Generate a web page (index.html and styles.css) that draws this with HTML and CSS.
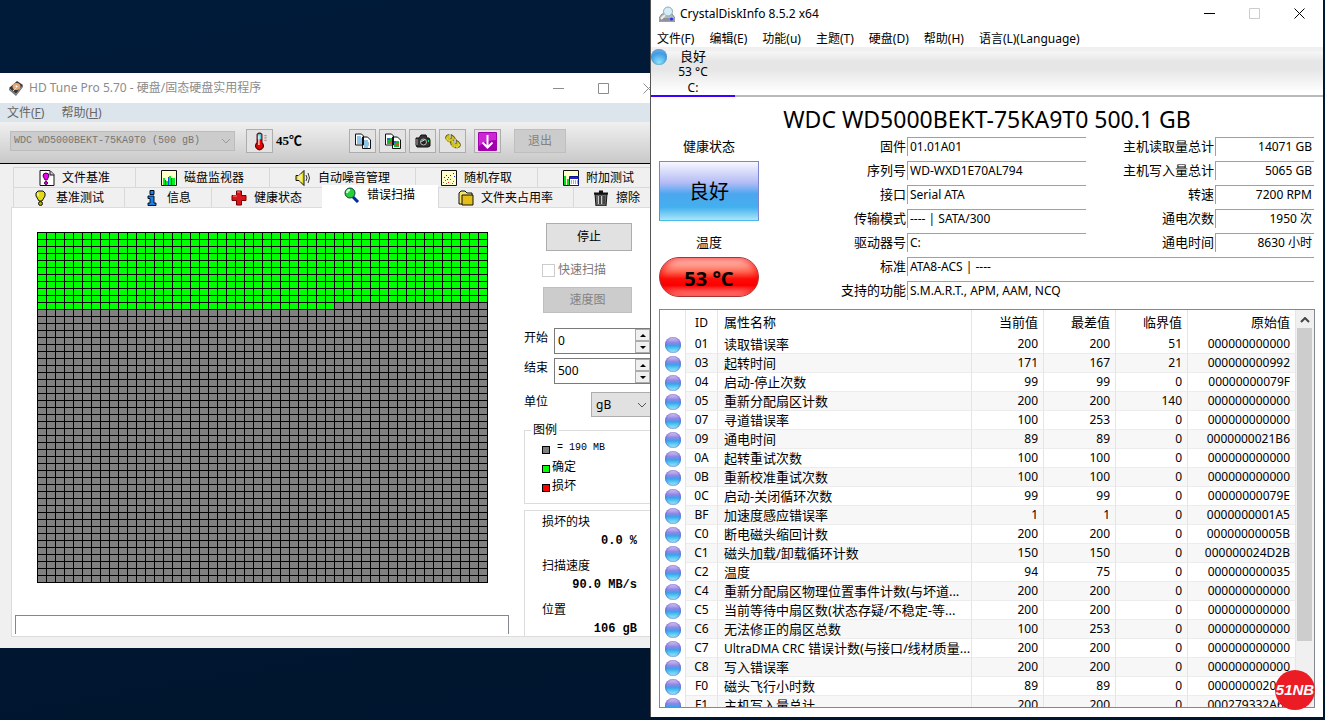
FILE: index.html
```html
<!DOCTYPE html>
<html lang="zh-CN">

<head>
  <meta charset="UTF-8">
  <meta name="viewport" content="width=device-width, initial-scale=1.0">
  <title>HD Tune Pro / CrystalDiskInfo</title>
  <link rel="stylesheet" href="styles.css">
</head>

<body>
  <section class="window hdtune">
    <header class="hd-title">
      <svg class="icon" viewBox="0 0 16 16"><path d="M1 8L9 1l6 4-7 9z" fill="#3a3432"/><path d="M1 8l7 6v2L1 10zM8 14l7-9v2l-7 9z" fill="#777"/><ellipse cx="8.500" cy="6.500" rx="4" ry="3.500" fill="#e0a878"/><circle cx="8.500" cy="6.500" r="1" fill="#fff"/><path d="M5 11l3-3" stroke="#ddd"/></svg>
      <span class="hd-name">HD Tune Pro 5.70 - 硬盘/固态硬盘实用程序</span>
      <button class="win-btn" aria-label="最小化"><svg viewBox="0 0 11 11"><path d="M0 5.500h11"/></svg></button>
      <button class="win-btn" aria-label="最大化"><svg viewBox="0 0 11 11"><path d="M.5.5h10v10H.5z"/></svg></button>
      <button class="win-btn" aria-label="关闭"><svg viewBox="0 0 11 11"><path d="M.5.5l10 10M10.500.5l-10 10"/></svg></button>
    </header>

    <nav class="hd-menu">
      <a href="#">文件(<u>F</u>)</a>
      <a href="#">帮助(<u>H</u>)</a>
    </nav>

    <div class="toolbar">
      <div class="drive">
        <select aria-label="驱动器" disabled>
          <option>WDC WD5000BEKT-75KA9T0 (500 gB)</option>
        </select>
        <svg class="arrow" viewBox="0 0 10 6"><path d="M1 1l4 4 4-4"/></svg>
      </div>
      <button class="tool temp-tool" aria-label="温度"><svg class="icon-lg" viewBox="0 0 16 16"><path d="M6 2q2-2 4 0v7q2 2 1 4-3 4-6 0-1-2 1-4z" fill="#e00" stroke="#600"/><path d="M6.500 2q1.500-1 3 0v4h-3z" fill="#5cd"/><path d="M7.500 3v8" stroke="#fff"/><path d="M12 3h2M12 5h2M12 7h2" stroke="#a99"/></svg></button>
      <b class="temp">45℃</b>
      <div class="tools">
        <button class="tool" aria-label="复制文本"><svg class="icon" viewBox="0 0 16 16"><path d="M.5 1h6l2 2v9h-8zM7.500 4h5l3 3v8.500h-8z" fill="#fff" stroke="#111"/><path d="M2 4h4M2 6h5M2 8h5M2 10h5M9 8h4M9 10h5M9 12h5M9 14h4" stroke="#28c"/></svg></button>
        <button class="tool" aria-label="复制图像"><svg class="icon" viewBox="0 0 16 16"><path d="M.5 1h6l2 2v9h-8zM7.500 4h5l3 3v8.500h-8z" fill="#fff" stroke="#111"/><path d="M2 5h5v6H2zM9 8h5v6H9z" fill="#1b3"/><path d="M2 5h3v2H2zM9 8h2v2H9z" fill="#36d"/><path d="M5 8h2v2H5zM11 11h3v2h-3z" fill="#e43"/></svg></button>
        <button class="tool" aria-label="截图"><svg class="icon" viewBox="0 0 16 16"><path d="M1 5h3l2-3h5l1 3h2l1 2v6l-2 1H2l-1-2z" fill="#333" stroke="#111"/><path d="M2 6v6" stroke="#aaa"/><circle cx="8.500" cy="9" r="3" fill="#222" stroke="#bbb"/><path d="M6.500 9q1-2 3-2" stroke="#fff" fill="none"/><path d="M13 7h1v2h-1z" fill="#0e4"/></svg></button>
        <button class="tool" aria-label="选项"><svg class="icon" viewBox="0 0 16 16"><ellipse cx="5.500" cy="5.500" rx="5" ry="3.500" fill="#cfc31c" stroke="#665a00" transform="rotate(25 5.500 5.500)"/><ellipse cx="10.500" cy="11" rx="5" ry="3.500" fill="#cfc31c" stroke="#665a00" transform="rotate(25 10.500 11)"/><path d="M2 5v3M4 7v3M7 7v2M7 12v2M9 13v2M12 13v2M14 11v2" stroke="#f2ea70"/><path d="M6 1v5M11 6v5" stroke="#444"/><path d="M4 1h2v4H4zM9 6h2v4H9z" fill="#bbb"/></svg></button>
        <button class="tool save" aria-label="保存"><svg class="icon-lg" viewBox="0 0 19 19"><rect width="19" height="19" rx="1" fill="#a300ad"/><path d="M1 1h17v7Q8 8 1 14z" fill="#c928d2"/><path d="M9.500 3v12M4.500 10.500l5 5 5-5" fill="none" stroke="#fff" stroke-width="2"/></svg></button>
      </div>
      <button class="btn exit" disabled>退出</button>
    </div>

    <div class="tabs" role="tablist">
      <div class="tab-row top-row">
        <button class="tab" role="tab"><svg class="icon" viewBox="0 0 16 16"><path d="M1 .5h10l4 4v11H1z" fill="#fff" stroke="#111"/><path d="M11 1v4h4" fill="#ccc" stroke="#111"/><path d="M4 6q0-3 3-3t3 3l-2 4H6z" fill="#e0e" stroke="#404"/><circle cx="7" cy="13" r="1.500" fill="#e0e" stroke="#404"/></svg>文件基准</button>
        <button class="tab" role="tab"><svg class="icon" viewBox="0 0 16 16"><path d="M.5.5h15v15H.5z" fill="#ffc" stroke="#111"/><path d="M2 8h2v7H2zM5 11h2v4H5zM8 6h2v9H8zM11 8h3v7h-3z" fill="#0e2"/><path d="M4 10h1v5H4zM7 7h1v8H7zM10 8h1v7h-1z" fill="#05d"/></svg>磁盘监视器</button>
        <button class="tab" role="tab"><svg class="icon" viewBox="0 0 16 16"><path d="M1 5.500h3l5-5v15l-5-5H1z" fill="#e8dc20" stroke="#111"/><path d="M4 5v5M6 4v8" stroke="#fff"/><path d="M11 5q2 3 0 6M13 3q3 5 0 10" fill="none" stroke="#333"/></svg>自动噪音管理</button>
        <button class="tab" role="tab"><svg class="icon" viewBox="0 0 16 16"><path d="M.5.5h15v15H.5z" fill="#ffc" stroke="#111"/><path d="M2 12h1v1H2zM4 10h1v1H4zM7 12h1v1H7zM9 9h1v1H9zM12 11h1v1h-1zM5 13h1v1H5zM11 13h1v1h-1z" fill="#f22"/><path d="M3 7h1v1H3zM5 5h1v1H5zM7 7h1v1H7zM9 5h1v1H9zM12 3h1v1h-1zM13 6h1v1h-1zM6 9h1v1H6z" fill="#22d"/></svg>随机存取</button>
        <button class="tab" role="tab"><svg class="icon" viewBox="0 0 16 16"><path d="M.5.5h15v15H.5z" fill="#ffc" stroke="#111"/><path d="M1 6h2v9H1zM4 9h2v6H4z" fill="#0d2"/><path d="M6.500 6.500h9v9h-9z" fill="#fff" stroke="#118"/><path d="M7 7h8v2H7z" fill="#22c"/><path d="M8 11h7M8 13h7" stroke="#e22" stroke-dasharray="1 1"/></svg>附加测试</button>
      </div>
      <div class="tab-row">
        <button class="tab" role="tab"><svg class="icon" viewBox="0 0 16 16"><path d="M5 1h5l2 2v3l-3 5H6L3 6V3z" fill="#e2da18" stroke="#111"/><path d="M5 3v3" stroke="#fff"/><circle cx="7.500" cy="13.500" r="2" fill="#aa1" stroke="#111"/></svg>基准测试</button>
        <button class="tab" role="tab"><svg class="icon" viewBox="0 0 16 16"><path d="M6 .5h4v4H6zM4 6h6v7h2v2.500H4V13h2V8.500H4z" fill="#1c7fe8" stroke="#012"/></svg>信息</button>
        <button class="tab" role="tab"><svg class="icon" viewBox="0 0 16 16"><path d="M5.500 1h5v4.500H15v5h-4.500V15h-5v-4.500H1v-5h4.500z" fill="#d8161c" stroke="#700"/><path d="M6 2h3M2 6h4" stroke="#f88"/></svg>健康状态</button>
        <button class="tab active" role="tab" aria-selected="true"><svg class="icon" viewBox="0 0 16 16"><path d="M9 10l5 5" stroke="#012a9a" stroke-width="3"/><circle cx="6" cy="6" r="5" fill="#24d03c" stroke="#143"/><path d="M3 6q0-3 3-3" stroke="#dfd" fill="none" stroke-width="2"/></svg>错误扫描</button>
        <button class="tab" role="tab"><svg class="icon" viewBox="0 0 16 16"><path d="M1 3l2-2h4l2 2h5v11H1z" fill="#f5e36a" stroke="#111"/><path d="M4 5h11v10H4z" fill="#e3bd18" stroke="#111"/></svg>文件夹占用率</button>
        <button class="tab" role="tab"><svg class="icon" viewBox="0 0 16 16"><path d="M2 4h12l-1 12H3z" fill="#666" stroke="#111"/><path d="M1 3.500h14M6 1.500h4" stroke="#111" stroke-width="2"/><path d="M5.500 6v8M8.500 6v8" stroke="#ccc"/><path d="M7 6v8M11 6v8" stroke="#222"/></svg>擦除</button>
      </div>
    </div>

    <div class="panel">
      <div class="scan">
        <!-- 50 x 50 blocks, 9x7 each -->
        <svg class="map" viewBox="0 0 451 351">
          <defs>
            <pattern id="cells" width="9" height="7" patternUnits="userSpaceOnUse">
              <path d="M0 0h9v1H1v6H0z" fill="#000"/>
            </pattern>
          </defs>
          <rect width="451" height="351" fill="#808080"/>
          <path d="M0 0h451v70H298v7H0z" fill="#00ff00"/>
          <rect width="451" height="351" fill="url(#cells)"/>
        </svg>
        <div class="progress"></div>
      </div>

      <div class="side">
        <button class="btn stop">停止</button>
        <label class="quick"><input type="checkbox" disabled>快速扫描</label>
        <button class="btn speed" disabled>速度图</button>
        <div class="field">
          <label for="start">开始</label>
          <div class="spin">
            <input id="start" type="text" value="0">
            <button class="up" aria-label="增加"></button>
            <button class="down" aria-label="减少"></button>
          </div>
        </div>
        <div class="field">
          <label for="end">结束</label>
          <div class="spin">
            <input id="end" type="text" value="500">
            <button class="up" aria-label="增加"></button>
            <button class="down" aria-label="减少"></button>
          </div>
        </div>
        <div class="field unit">
          <label for="unit">单位</label>
          <div class="unit-select">
            <select id="unit">
              <option>gB</option>
              <option>mB</option>
            </select>
            <svg class="arrow" viewBox="0 0 10 6"><path d="M1 1l4 4 4-4"/></svg>
          </div>
        </div>
        <fieldset class="legend">
          <legend>图例</legend>
          <p class="mono"><i class="block"></i>= 190 MB</p>
          <p><i class="block ok"></i>确定</p>
          <p><i class="block bad"></i>损坏</p>
        </fieldset>
        <dl class="result">
          <dt>损坏的块</dt>
          <dd>0.0 %</dd>
          <dt>扫描速度</dt>
          <dd>90.0 MB/s</dd>
          <dt>位置</dt>
          <dd>106 gB</dd>
        </dl>
      </div>
    </div>
  </section>

  <section class="window crystal">
    <header class="cdi-title">
      <svg class="icon" viewBox="0 0 16 16"><path d="M3 8h10l3 4v4H0v-4z" fill="#b4b8c0" stroke="#888"/><path d="M1 12h14v3H1z" fill="#8d929c"/><circle cx="9" cy="5.500" r="4.500" fill="#d5ecfa" stroke="#8aa"/><path d="M6 9l-4 4" stroke="#eee" stroke-width="2"/><circle cx="12.500" cy="13" r="1.500" fill="#23f"/></svg>
      <span class="cdi-name">CrystalDiskInfo 8.5.2 x64</span>
      <button class="win-btn" aria-label="最小化"><svg viewBox="0 0 11 11"><path d="M0 5.500h11"/></svg></button>
      <button class="win-btn" aria-label="最大化" disabled><svg viewBox="0 0 11 11"><path d="M.5.5h10v10H.5z"/></svg></button>
      <button class="win-btn" aria-label="关闭"><svg viewBox="0 0 11 11"><path d="M.5.5l10 10M10.500.5l-10 10"/></svg></button>
    </header>

    <nav class="cdi-menu">
      <a href="#">文件(F)</a>
      <a href="#">编辑(E)</a>
      <a href="#">功能(u)</a>
      <a href="#">主题(T)</a>
      <a href="#">硬盘(D)</a>
      <a href="#">帮助(H)</a>
      <a href="#">语言(L)(Language)</a>
    </nav>

    <div class="disks">
      <button class="disk">
        <i class="orb"></i>
        <span class="zh">良好</span>
        <span>53 °C</span>
        <span>C:</span>
      </button>
    </div>

    <h1>WDC WD5000BEKT-75KA9T0 500.1 GB</h1>

    <div class="summary">
      <div class="status">
        <span class="caption">健康状态</span>
        <button class="health">良好</button>
        <span class="caption">温度</span>
        <button class="heat">53 °C</button>
      </div>
      <div class="info">
        <label for="fw">固件</label><input id="fw" value="01.01A01" readonly>
        <label for="reads">主机读取量总计</label><input id="reads" class="num" value="14071 GB" readonly>
        <label for="sn">序列号</label><input id="sn" value="WD-WXD1E70AL794" readonly>
        <label for="writes">主机写入量总计</label><input id="writes" class="num" value="5065 GB" readonly>
        <label for="iface">接口</label><input id="iface" value="Serial ATA" readonly>
        <label for="rpm">转速</label><input id="rpm" class="num" value="7200 RPM" readonly>
        <label for="mode">传输模式</label><input id="mode" value="---- | SATA/300" readonly>
        <label for="count">通电次数</label><input id="count" class="num" value="1950 次" readonly>
        <label for="letter">驱动器号</label><input id="letter" value="C:" readonly>
        <label for="hours">通电时间</label><input id="hours" class="num" value="8630 小时" readonly>
        <label for="std">标准</label><input id="std" class="wide" value="ATA8-ACS | ----" readonly>
        <label for="feat">支持的功能</label><input id="feat" class="wide" value="S.M.A.R.T., APM, AAM, NCQ" readonly>
      </div>
    </div>

    <div class="smart">
      <div class="smart-view">
        <table>
          <colgroup>
            <col class="c-icon"><col class="c-id"><col><col class="c-val"><col class="c-val"><col class="c-val"><col class="c-raw">
          </colgroup>
          <thead>
            <tr><th></th><th>ID</th><th>属性名称</th><th>当前值</th><th>最差值</th><th>临界值</th><th>原始值</th></tr>
          </thead>
          <tbody>
            <tr><td><i class="orb"></i></td><td>01</td><td>读取错误率</td><td>200</td><td>200</td><td>51</td><td>000000000000</td></tr>
            <tr><td><i class="orb"></i></td><td>03</td><td>起转时间</td><td>171</td><td>167</td><td>21</td><td>000000000992</td></tr>
            <tr><td><i class="orb"></i></td><td>04</td><td>启动-停止次数</td><td>99</td><td>99</td><td>0</td><td>00000000079F</td></tr>
            <tr><td><i class="orb"></i></td><td>05</td><td>重新分配扇区计数</td><td>200</td><td>200</td><td>140</td><td>000000000000</td></tr>
            <tr><td><i class="orb"></i></td><td>07</td><td>寻道错误率</td><td>100</td><td>253</td><td>0</td><td>000000000000</td></tr>
            <tr><td><i class="orb"></i></td><td>09</td><td>通电时间</td><td>89</td><td>89</td><td>0</td><td>0000000021B6</td></tr>
            <tr><td><i class="orb"></i></td><td>0A</td><td>起转重试次数</td><td>100</td><td>100</td><td>0</td><td>000000000000</td></tr>
            <tr><td><i class="orb"></i></td><td>0B</td><td>重新校准重试次数</td><td>100</td><td>100</td><td>0</td><td>000000000000</td></tr>
            <tr><td><i class="orb"></i></td><td>0C</td><td>启动-关闭循环次数</td><td>99</td><td>99</td><td>0</td><td>00000000079E</td></tr>
            <tr><td><i class="orb"></i></td><td>BF</td><td>加速度感应错误率</td><td>1</td><td>1</td><td>0</td><td>0000000001A5</td></tr>
            <tr><td><i class="orb"></i></td><td>C0</td><td>断电磁头缩回计数</td><td>200</td><td>200</td><td>0</td><td>00000000005B</td></tr>
            <tr><td><i class="orb"></i></td><td>C1</td><td>磁头加载/卸载循环计数</td><td>150</td><td>150</td><td>0</td><td>000000024D2B</td></tr>
            <tr><td><i class="orb"></i></td><td>C2</td><td>温度</td><td>94</td><td>75</td><td>0</td><td>000000000035</td></tr>
            <tr><td><i class="orb"></i></td><td>C4</td><td>重新分配扇区物理位置事件计数(与坏道...</td><td>200</td><td>200</td><td>0</td><td>000000000000</td></tr>
            <tr><td><i class="orb"></i></td><td>C5</td><td>当前等待中扇区数(状态存疑/不稳定-等...</td><td>200</td><td>200</td><td>0</td><td>000000000000</td></tr>
            <tr><td><i class="orb"></i></td><td>C6</td><td>无法修正的扇区总数</td><td>100</td><td>253</td><td>0</td><td>000000000000</td></tr>
            <tr><td><i class="orb"></i></td><td>C7</td><td><span class="latin">UltraDMA CRC</span> 错误计数(与接口/线材质量...</td><td>200</td><td>200</td><td>0</td><td>000000000000</td></tr>
            <tr><td><i class="orb"></i></td><td>C8</td><td>写入错误率</td><td>200</td><td>200</td><td>0</td><td>000000000000</td></tr>
            <tr><td><i class="orb"></i></td><td>F0</td><td>磁头飞行小时数</td><td>89</td><td>89</td><td>0</td><td>000000002050</td></tr>
            <tr><td><i class="orb"></i></td><td>F1</td><td>主机写入量总计</td><td>200</td><td>200</td><td>0</td><td>000279332A6F</td></tr>
          </tbody>
        </table>
      </div>
      <div class="scrollbar">
        <svg viewBox="0 0 10 6"><path d="M1 5l4-4 4 4"/></svg>
        <div class="thumb"></div>
      </div>
    </div>
  </section>

  <div class="badge">51NB</div>
</body>

</html>
```
FILE: styles.css
```css
* {
  box-sizing: border-box;
}

body {
  margin: 0;
  height: 100vh;
  position: relative;
  overflow: hidden;
  font-family: "Noto Sans", "Noto Sans CJK SC", sans-serif;
  font-size: 12px;
  line-height: 16px;
  color: #000;
  background: linear-gradient(170deg, #001b3a, #001731 60%, #00152e);
}

button,
input,
select {
  font: inherit;
  color: inherit;
  margin: 0;
  padding: 0;
  border-radius: 0;
}

button {
  border: none;
  background: none;
}

a {
  color: inherit;
  text-decoration: none;
}

p,
dl,
dd,
h1 {
  margin: 0;
}

.icon {
  width: 16px;
  height: 16px;
  flex: none;
}

.icon-lg {
  width: 19px;
  height: 19px;
}

.arrow {
  position: absolute;
  right: 4px;
  top: 50%;
  width: 10px;
  height: 6px;
  margin-top: -3px;
  fill: none;
  stroke: #555;
  pointer-events: none;
}

/* desktop windows */
.window {
  position: absolute;
  display: flex;
  flex-direction: column;
}

.win-btn {
  width: 45px;
  height: 100%;
  display: flex;
  align-items: center;
  justify-content: center;
}

.win-btn svg {
  width: 11px;
  height: 11px;
  fill: none;
  stroke: currentColor;
}

.hdtune {
  left: 0;
  top: 73px;
  width: 671px;
  background: #f0f0f0;
}

.hd-title {
  display: flex;
  align-items: center;
  height: 30px;
  padding-left: 8px;
  background: #fff;
  color: #8c8c8c;
}

.hd-name {
  flex: 1;
  padding-left: 5px;
}

.hd-menu {
  display: flex;
  gap: 17px;
  height: 19px;
  padding-left: 7px;
  line-height: 19px;
  background: #dce4ec;
  color: #666;
}

.toolbar {
  display: flex;
  align-items: center;
  height: 42px;
  padding: 0 10px 3px;
  background: linear-gradient(#f0f0f0, #c9c9c9);
  border-bottom: 1px solid #000;
}

.drive {
  position: relative;
  width: 225px;
}

.drive select {
  appearance: none;
  display: block;
  width: 100%;
  height: 20px;
  padding-left: 3px;
  border: 1px solid #bcbcbc;
  background: #ccc;
  color: #777;
  opacity: 1;
  font-family: "Liberation Mono", monospace;
  font-size: 10px;
}

.drive .arrow {
  stroke: #999;
}

.tool {
  display: flex;
  align-items: center;
  justify-content: center;
  width: 27px;
  height: 24px;
  border: 1px solid #adadad;
  background: #e3e3e3;
}

.temp-tool {
  margin-left: 11px;
}

.temp {
  width: 76px;
  padding-left: 3px;
  font-family: "Liberation Serif", "Noto Sans CJK SC", serif;
  font-size: 13px;
}

.tools {
  display: flex;
  gap: 3px;
}

.tools .save {
  margin-left: 5px;
}

.btn {
  border: 1px solid #adadad;
  background: #e1e1e1;
}

.btn:disabled {
  border-color: #bfbfbf;
  background: #ccc;
  color: #838383;
}

.exit {
  width: 52px;
  height: 24px;
  margin-left: 13px;
}

/* tabs */
.tabs {
  padding: 3px 0 0 13px;
}

.tab-row {
  display: flex;
  height: 20px;
}

.tab {
  display: flex;
  align-items: center;
  gap: 7px;
  height: 20px;
  padding: 0 20px 0 19px;
  border-left: 1px solid #d9d9d9;
  border-top: 1px solid #d9d9d9;
  background: #f0f0f0;
  white-space: nowrap;
}

.top-row .tab {
  padding: 0 25px;
}

.tab.active {
  position: relative;
  height: 23px;
  margin-top: -2px;
  padding: 0 23px 4px 21px;
  border-color: #fff;
  background: #fff;
}

.panel {
  display: flex;
  height: 430px;
  margin: 0 0 11px 11px;
  border: 1px solid #dcdcdc;
  background: #fff;
}

.scan {
  display: flex;
  flex-direction: column;
  justify-content: space-between;
  width: 512px;
  padding: 24px 15px 2px 3px;
}

.map {
  width: 451px;
  height: 351px;
  margin-left: 22px;
}

.progress {
  height: 19px;
  border: 1px solid #828790;
  border-bottom: none;
}

.side {
  display: flex;
  flex-direction: column;
  flex: 1;
}

.side > * {
  flex: none;
}

.stop {
  width: 86px;
  height: 28px;
  margin: 15px 0 0 22px;
}

.quick {
  display: flex;
  align-items: center;
  gap: 3px;
  margin: 11px 0 0 18px;
  color: #777;
}

.quick input {
  appearance: none;
  width: 13px;
  height: 13px;
  border: 1px solid #ccc;
  background: #fff;
}

.speed {
  width: 89px;
  height: 26px;
  margin: 9px 0 15px 19px;
}

.field {
  display: flex;
  justify-content: space-between;
  width: 127px;
  margin-bottom: 4px;
  line-height: 20px;
}

.spin {
  display: grid;
  grid-template: 12px 12px / 1fr 15px;
  width: 97px;
  height: 26px;
  border: 1px solid #7a7a7a;
  background: #fff;
}

.spin input {
  grid-row: 1 / 3;
  width: 100%;
  padding-left: 3px;
  border: none;
  background: none;
}

.spin button {
  display: flex;
  align-items: center;
  justify-content: center;
  border: 1px solid #acacac;
  background: #f0f0f0;
}

.up::before,
.down::before {
  content: "";
  border: 3px solid transparent;
}

.up::before {
  border-top: none;
  border-bottom-color: #000;
}

.down::before {
  border-bottom: none;
  border-top-color: #000;
}

.unit {
  margin-top: 4px;
}

.unit-select {
  position: relative;
  width: 60px;
}

.unit-select select {
  appearance: none;
  display: block;
  width: 100%;
  height: 25px;
  padding-left: 4px;
  border: 1px solid #adadad;
  background: #e1e1e1;
}

.legend {
  height: 82px;
  margin: 1px 0 6px;
  padding: 0 0 0 17px;
  border: 1px solid #dcdcdc;
}

.legend legend {
  margin-left: -11px;
  padding: 0 2px;
}

.legend p {
  display: flex;
  align-items: center;
  gap: 2px;
  height: 19px;
}

.legend .mono {
  gap: 7px;
  font-family: "Liberation Mono", monospace;
  font-size: 10px;
}

.block {
  width: 8px;
  height: 8px;
  margin-top: 4px;
  border: 1px solid #000;
  background: #808080;
}

.block.ok {
  background: #0f0;
}

.block.bad {
  background: #f00;
}

.side .result {
  flex: 1;
  min-height: 0;
  padding: 3px 32px 0 17px;
  border: 1px solid #dcdcdc;
  border-bottom: none;
}

.result dd {
  height: 28px;
  padding-top: 3px;
  font: bold 12px/16px "Liberation Mono", monospace;
  text-align: right;
}

/* CrystalDiskInfo */
.crystal {
  left: 650px;
  right: 2px;
  top: 0;
  bottom: 3px;
  border-left: 1px solid #555;
  background: #fff;
}

.cdi-title {
  display: flex;
  align-items: center;
  height: 27px;
  padding: 0 1px 0 8px;
}

.cdi-name {
  flex: 1;
  padding-left: 5px;
}

.cdi-title .win-btn:disabled {
  color: #ccc;
}

.cdi-menu {
  display: flex;
  gap: 15px;
  height: 20px;
  padding-left: 6px;
  line-height: 24px;
}

.disks {
  height: 50px;
  border-bottom: 2px solid #b9b9b9;
  background: linear-gradient(#f0f0f0 8%, #f6f6f6 10%, #e6e6e6 30%, #e6e6e6 46%, #fff 95%);
}

.disk {
  position: relative;
  display: flex;
  flex-direction: column;
  align-items: center;
  width: 84px;
  height: 50px;
  padding-top: 1px;
  border-bottom: 2px solid #4000ff;
}

.disk .zh {
  font-size: 13px;
}

.orb {
  display: block;
  width: 16px;
  height: 16px;
  margin: 0 auto;
  border-radius: 50%;
  background: linear-gradient(#e0cdf3, #8f86e6 35%, #3ba2ea 55%, #5ccdf2 75%, #b5edfb);
  box-shadow: inset 0 0 2px #4638b8;
}

.disk .orb {
  position: absolute;
  left: 0;
  top: 2px;
  background: radial-gradient(circle at 50% 85%, #8be4fb, #419be6 60%, #8cbcf0);
  box-shadow: inset 0 0 2px #47829e;
}

.crystal h1 {
  height: 40px;
  padding-top: 4px;
  font-size: 23px;
  font-weight: normal;
  line-height: 36px;
  text-align: center;
}

.summary {
  display: flex;
  padding: 0 9px 0 8px;
}

.status {
  display: flex;
  flex-direction: column;
  align-items: center;
  width: 100px;
}

.caption {
  font-size: 13px;
  line-height: 18px;
}

.health {
  width: 100%;
  height: 60px;
  margin: 6px 0 12px;
  padding-top: 2px;
  border: 1px solid #7d86cd;
  border-bottom-color: #4abbe8;
  background: linear-gradient(#f8f7ff, #b5bdf6 35%, #4ca6f0 55%, #43b0ee 78%, #a9e6f9);
  font-size: 20px;
}

.heat {
  width: 100%;
  height: 40px;
  margin-top: 6px;
  padding-top: 3px;
  border: 1px solid #a33;
  border-radius: 20px;
  background: linear-gradient(#ffe0d8, #ff6a55 35%, #fb0d08 55%, #fc0000 72%, #ffaaa2);
  box-shadow: inset 0 0 8px #f00;
  font-size: 20px;
  font-weight: bold;
}

.info {
  flex: 1;
  display: grid;
  grid-template-columns: 148px 1fr 129px 99px;
  grid-auto-rows: 19px;
  row-gap: 5px;
  padding-bottom: 9px;
}

.info label {
  padding-right: 1px;
  font-size: 13px;
  line-height: 18px;
  text-align: right;
}

.info input {
  width: 100%;
  min-width: 0;
  padding-left: 2px;
  border: solid #a0a0a0;
  border-width: 1px 0 0 1px;
  background: #fff;
}

.info .num {
  padding-right: 2px;
  text-align: right;
}

.info .wide {
  grid-column: 2 / 5;
}

.smart {
  display: flex;
  flex: 1;
  min-height: 0;
  margin: 0 8px 9px;
  border: 1px solid #828790;
}

.smart-view {
  flex: 1;
  overflow: hidden;
}

table {
  width: 100%;
  table-layout: fixed;
  border-collapse: separate;
  border-spacing: 0;
}

.c-icon {
  width: 26px;
}

.c-id {
  width: 32px;
}

.c-val {
  width: 72px;
}

.c-raw {
  width: 108px;
}

th,
td {
  height: 19px;
  padding: 0 5px 0 0;
  border-right: 1px solid #e5e5e5;
  border-bottom: 1px solid #ececec;
  line-height: 18px;
  text-align: right;
  white-space: nowrap;
}

th {
  height: 25px;
  padding-bottom: 1px;
  border-bottom: none;
  font-size: 13px;
  font-weight: normal;
}

td:first-child {
  padding: 0;
  border-bottom: none;
}

th:nth-child(2),
td:nth-child(2) {
  padding: 0;
  font-size: 12px;
  text-align: center;
}

th:nth-child(3),
td:nth-child(3) {
  padding-left: 6px;
  padding-right: 0;
  font-size: 13px;
  text-align: left;
}

.latin {
  font-size: 12px;
  line-height: 12px;
}

tbody tr:nth-child(even) td:not(:first-child) {
  background: #f7f7f7;
}

.scrollbar {
  width: 18px;
  padding: 7px 2px 0 1px;
  background: #f0f0f0;
}

.scrollbar svg {
  display: block;
  width: 10px;
  height: 6px;
  margin: 0 auto 5px;
  fill: none;
  stroke: #444;
  stroke-width: 2;
}

.thumb {
  height: 313px;
  background: #cdcdcd;
}

.badge {
  position: absolute;
  right: 10px;
  bottom: 10px;
  width: 40px;
  height: 40px;
  border-radius: 50%;
  background: #ec1c24;
  color: #fff;
  font: italic bold 15px/40px "Liberation Sans", Arial, sans-serif;
  text-align: center;
}
```
